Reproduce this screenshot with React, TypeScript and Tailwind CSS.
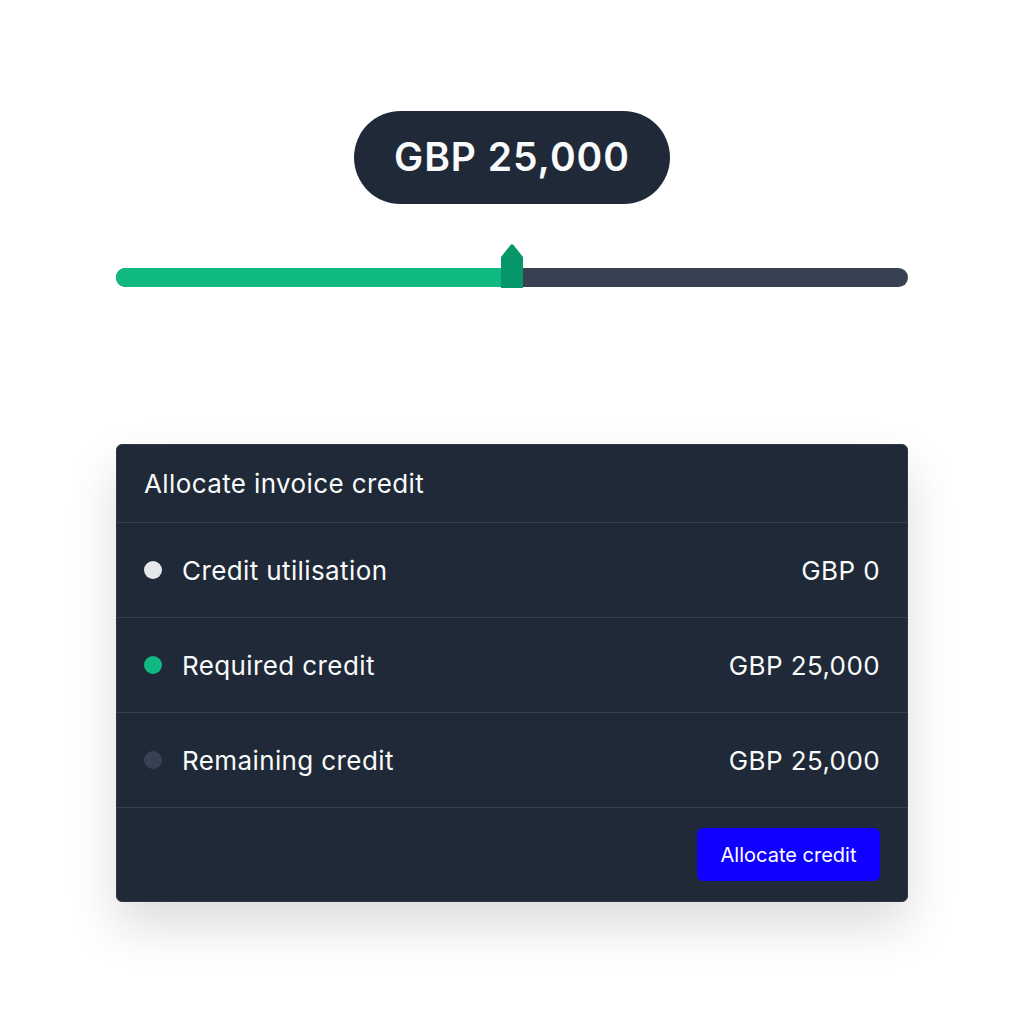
import React from "react";

const rows = [
  { label: "Credit utilisation", value: "GBP 0", dot: "bg-[#e5e7eb]" },
  { label: "Required credit", value: "GBP 25,000", dot: "bg-[#10b981]" },
  { label: "Remaining credit", value: "GBP 25,000", dot: "bg-[#374151]" },
];

function Slider({ value }: { value: number }) {
  return (
    <div className="relative h-[44px] w-[792px]">
      <div className="absolute bottom-[1px] left-0 right-0 flex h-[19px] overflow-hidden rounded-full bg-[#374151]">
        <div className="h-full bg-[#10b981]" style={{ width: `${value}%` }} />
      </div>
      <svg
        className="absolute top-0 h-[44px] w-[22px] -translate-x-1/2"
        style={{ left: `${value}%` }}
        viewBox="0 0 22 44"
        aria-hidden="true"
      >
        <path d="M0 13 L9.5 1 Q11 -0.5 12.5 1 L22 13 L22 44 L0 44 Z" fill="#059669" />
      </svg>
    </div>
  );
}

export default function App() {
  return (
    <div className="flex min-h-[1024px] w-full flex-col items-center bg-white pt-[111px] font-['Inter',sans-serif] text-[#f9fafb]">
      <div className="flex h-[93px] w-[316px] items-center justify-center rounded-full bg-[#1f2937] text-[39px] font-semibold tracking-wide">
        GBP 25,000
      </div>

      <div className="mt-[40px]">
        <Slider value={50} />
      </div>

      <div className="mt-[156px] w-[792px] overflow-hidden rounded-[6px] border border-[#2d3748] bg-[#1f2937] shadow-[0_24px_50px_rgba(0,0,0,0.14)]">
        <div className="flex h-[78px] items-center border-b border-[#374151] px-[27px] text-[26px] tracking-[0.015em]">
          Allocate invoice credit
        </div>
        {rows.map((row) => (
          <div
            key={row.label}
            className="flex h-[95px] items-center justify-between border-b border-[#374151] px-[27px] text-[26px] tracking-[0.015em]"
          >
            <div className="flex items-center gap-[20px]">
              <span className={`size-[18px] rounded-full ${row.dot}`} />
              <span>{row.label}</span>
            </div>
            <span>{row.value}</span>
          </div>
        ))}
        <div className="flex h-[93px] items-center justify-end px-[27px]">
          <button className="h-[53px] w-[183px] rounded-[6px] bg-[#1000ff] text-[20px] text-white">
            Allocate credit
          </button>
        </div>
      </div>
    </div>
  );
}
